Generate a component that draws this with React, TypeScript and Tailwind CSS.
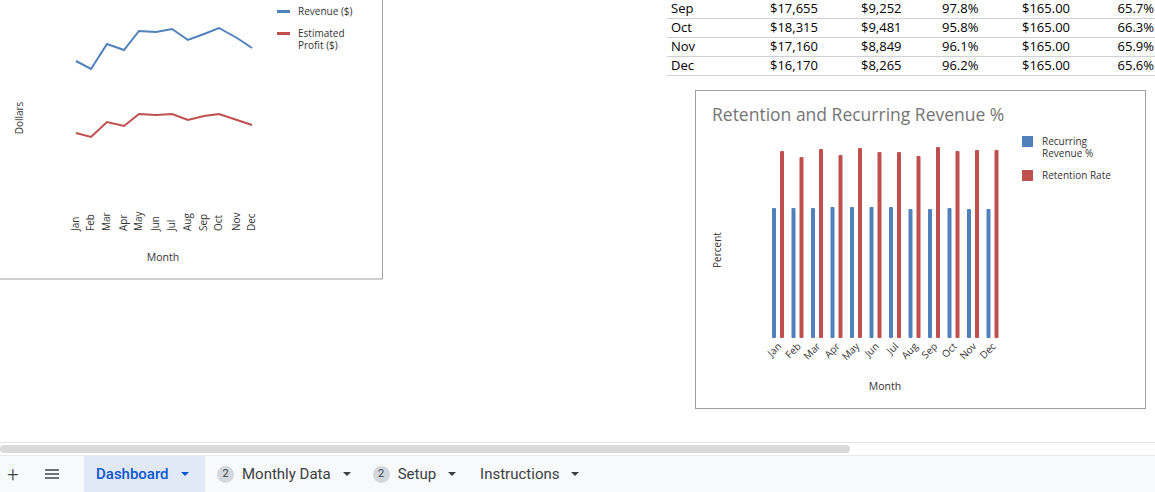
import React from "react";

const months = ["Jan","Feb","Mar","Apr","May","Jun","Jul","Aug","Sep","Oct","Nov","Dec"];
const lx = [76,91,107,124,139,156,172,188,204,219,237,252];
const blueY = [61,69,44,50,31,32,29,40,34,28,38,48];
const redY = [133,137,122,126,114,115,114,120,116,114,120,125];
const redTop = [151,157,149,155,148,152,152,156,147,151,150,150];
const blueTop = [208,208,208,207,207,207,207,209,209,208,209,209];

const rows = [
  ["Sep","$17,655","$9,252","97.8%","$165.00","65.7%"],
  ["Oct","$18,315","$9,481","95.8%","$165.00","66.3%"],
  ["Nov","$17,160","$8,849","96.1%","$165.00","65.9%"],
  ["Dec","$16,170","$8,265","96.2%","$165.00","65.6%"],
];

const font = { fontFamily: "'Open Sans', 'DejaVu Sans', sans-serif" };

function LineChart() {
  const pts = (ys: number[]) => lx.map((x, i) => `${x},${ys[i]}`).join(" ");
  return (
    <svg width="384" height="281" className="absolute left-0 top-0" style={font}>
      <polyline points={pts(blueY)} fill="none" stroke="#4f81bd" strokeWidth="2" />
      <polyline points={pts(redY)} fill="none" stroke="#c0504d" strokeWidth="2" />
      <rect x="277" y="10" width="13" height="3" fill="#4f81bd" />
      <text x="298" y="15" fontSize="10" fill="#333">Revenue ($)</text>
      <rect x="277" y="32" width="13" height="3" fill="#c0504d" />
      <text x="298" y="37" fontSize="10" fill="#333">Estimated</text>
      <text x="298" y="49" fontSize="10" fill="#333">Profit ($)</text>
      {months.map((m, i) => (
        <text key={m} x={0} y={0} fontSize="10" fill="#333" textAnchor="start"
          transform={`translate(${lx[i] + 3},${231}) rotate(-90)`}>{m}</text>
      ))}
      <text x="0" y="0" fontSize="10" fill="#333" textAnchor="middle" transform="translate(23,118) rotate(-90)">Dollars</text>
      <text x="163" y="261" fontSize="10.5" fill="#333" textAnchor="middle">Month</text>
      <polyline points="-2,279 382.5,279 382.5,-2" fill="none" stroke="#a0a0a0" strokeWidth="1" />
    </svg>
  );
}

function BarChart() {
  return (
    <svg width="452" height="320" className="absolute left-[695px] top-[90px]" style={font}>
      <rect x="0.5" y="0.5" width="450" height="318" fill="white" stroke="#a0a0a0" />
      <text x="17" y="31" fontSize="17.5" fill="#757575">Retention and Recurring Revenue %</text>
      {months.map((m, i) => {
        const bx = 77 + i * 19.5;
        return (
          <g key={m}>
            <rect x={bx} y={blueTop[i] - 90} width="4" height={338 - blueTop[i]} fill="#4f81bd" rx="1" />
            <rect x={bx + 8} y={redTop[i] - 90} width="4" height={338 - redTop[i]} fill="#c0504d" rx="1" />
            <text x="0" y="0" fontSize="10" fill="#333" textAnchor="end"
              transform={`translate(${bx + 10},${257}) rotate(-45)`}>{m}</text>
          </g>
        );
      })}
      <text x="190" y="300" fontSize="10.5" fill="#333" textAnchor="middle">Month</text>
      <text x="0" y="0" fontSize="10" fill="#333" textAnchor="middle" transform="translate(26,160) rotate(-90)">Percent</text>
      <rect x="327" y="46" width="11" height="11" fill="#4f81bd" />
      <text x="347" y="55" fontSize="10" fill="#333">Recurring</text>
      <text x="347" y="67" fontSize="10" fill="#333">Revenue %</text>
      <rect x="327" y="80" width="11" height="11" fill="#c0504d" />
      <text x="347" y="89" fontSize="10" fill="#333">Retention Rate</text>
    </svg>
  );
}

function Caret() {
  return <svg width="8" height="4" viewBox="0 0 8 4" className="ml-3"><path d="M0 0h8L4 4z" fill="currentColor" /></svg>;
}

export default function App() {
  return (
    <div className="w-[1155px] h-[492px] bg-white overflow-hidden flex flex-col" style={{ fontFamily: "Roboto, 'Liberation Sans', sans-serif" }}>
      <div className="relative h-[443px] border-b border-[#e3e3e3]">
        <LineChart />
        <div className="absolute left-[667px] top-0 w-[488px] text-[13px] text-black" style={{ fontFamily: "'Open Sans', 'DejaVu Sans', sans-serif" }}>
          {rows.map((r) => (
            <div key={r[0]} className="flex h-[20px] items-center border-b border-[#d0d0d8] -mt-[1px] first:mt-0 first:h-[19px]">
              <span className="w-[103px] pl-1">{r[0]}</span>
              <span className="w-[91px]">{r[1]}</span>
              <span className="w-[81px]">{r[2]}</span>
              <span className="w-[80px]">{r[3]}</span>
              <span className="w-[80px]">{r[4]}</span>
              <span className="flex-1 text-right pr-[1px]">{r[5]}</span>
            </div>
          ))}
        </div>
        <BarChart />
      </div>
      <div className="h-[12px] bg-white flex items-center">
        <div className="w-[850px] h-[8px] bg-[#dadada] rounded-full"></div>
      </div>
      <div className="flex-1 bg-[#f8f9fa] border-t border-[#e8eaed] flex items-stretch text-[15px] text-[#3c4043]">
        <div className="w-[26px] flex items-center justify-center text-[20px] font-light">+</div>
        <div className="w-[52px] flex items-center justify-center">
          <svg width="14" height="10" viewBox="0 0 14 10"><path d="M0 1h14M0 5h14M0 9h14" stroke="#444" strokeWidth="1.4" /></svg>
        </div>
        <div className="ml-[6px] w-[121px] bg-[#e1e9f7] text-[#0b57d0] font-medium flex items-center pl-3">Dashboard<Caret /></div>
        <div className="flex items-center pl-[12px] pr-3">
          <span className="w-[17px] h-[17px] rounded-full bg-[#d3d8de] text-[11px] flex items-center justify-center mr-2">2</span>
          Monthly Data<Caret />
        </div>
        <div className="flex items-center pl-[10px] pr-3">
          <span className="w-[17px] h-[17px] rounded-full bg-[#d3d8de] text-[11px] flex items-center justify-center mr-2">2</span>
          Setup<Caret />
        </div>
        <div className="flex items-center pl-[12px]">Instructions<Caret /></div>
      </div>
    </div>
  );
}
